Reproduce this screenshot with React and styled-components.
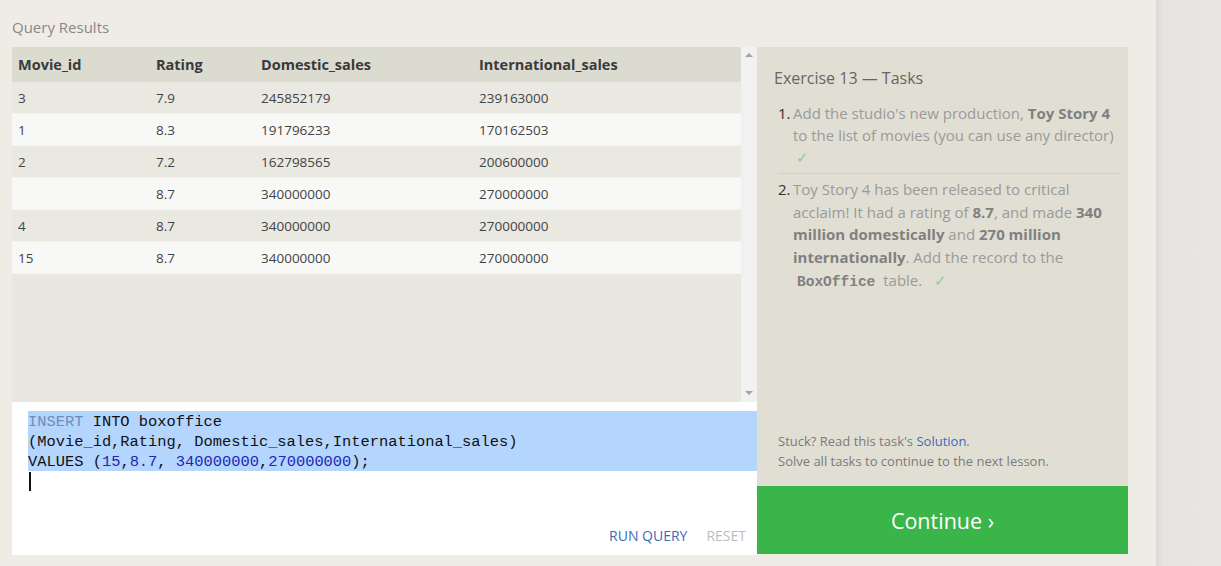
import React from "react";
import styled, { createGlobalStyle } from "styled-components";

const Global = createGlobalStyle`
  html, body { margin: 0; padding: 0; background: #efece6; }
  body { font-family: "Open Sans", "Noto Sans", sans-serif; }
  * { box-sizing: border-box; }
`;

const Page = styled.div`
  display: flex;
  width: 1221px;
  height: 566px;
  overflow: hidden;
`;

const Main = styled.div`
  width: 1156px;
  flex: none;
  padding: 0 28px 0 12px;
  display: flex;
  flex-direction: column;
`;

const SideStrip = styled.div`
  flex: 1;
  background: linear-gradient(to right, #dedad7 0px, #e8e4e1 8px, #e9e5e2 100%);
`;

const SectionLabel = styled.div`
  height: 47px;
  padding-top: 17px;
  font-size: 15px;
  line-height: 21px;
  color: #888;
`;

const Workspace = styled.div`
  display: grid;
  grid-template-columns: 745px 371px;
  height: 508px;
`;

const LeftCol = styled.div`
  display: flex;
  flex-direction: column;
`;

const ResultsArea = styled.div`
  display: flex;
  height: 355px;
  background: #e9e7e0;
`;

const TableWrap = styled.div`
  flex: 1;
`;

const Row = styled.div`
  display: grid;
  grid-template-columns: 138px 105px 218px 1fr;
  height: ${(p) => (p.$head ? "35px" : "32px")};
  align-items: center;
  padding-left: 6px;
  font-size: ${(p) => (p.$head ? "14.5px" : "13.5px")};
  font-weight: ${(p) => (p.$head ? 700 : 400)};
  color: ${(p) => (p.$head ? "#3a3a3a" : "#444")};
  background: ${(p) => (p.$head ? "#dcdbd0" : p.$odd ? "#e9e8e1" : "#f8f8f7")};
  border-bottom: ${(p) => (p.$head ? "none" : "1px solid #f4f3ef")};
`;

const Cell = styled.div`
  white-space: nowrap;
`;

const Scrollbar = styled.div`
  width: 16px;
  background: #f1f1f1;
  display: flex;
  flex-direction: column;
  justify-content: space-between;
  align-items: center;
  padding: 6px 0 7px;
`;

const Arrow = styled.div`
  width: 0;
  height: 0;
  border-left: 4px solid transparent;
  border-right: 4px solid transparent;
  ${(p) =>
    p.$down
      ? "border-top: 4px solid #a3a3a3;"
      : "border-bottom: 4px solid #a3a3a3;"}
`;

const Editor = styled.div`
  flex: 1;
  background: #fff;
  display: flex;
  flex-direction: column;
  padding: 9px 0 0 16px;
`;

const Code = styled.div`
  font-family: "Liberation Mono", "DejaVu Sans Mono", monospace;
  font-size: 15.4px;
  color: #111;
`;

const CodeLine = styled.div`
  height: 20px;
  line-height: 23px;
  white-space: pre;
  background: ${(p) => (p.$sel ? "#b4d5fe" : "transparent")};
`;

const Kw = styled.span`
  color: ${(p) => (p.$dim ? "#6d8db5" : "#111")};
`;

const Num = styled.span`
  color: #1c27b4;
`;

const Caret = styled.div`
  width: 2px;
  height: 19px;
  margin: 1px 0 0 1px;
  background: #111;
`;

const EditorActions = styled.div`
  margin-top: auto;
  display: flex;
  justify-content: flex-end;
  gap: 19px;
  padding: 0 11px 9px 0;
`;

const ActionBtn = styled.span`
  font-size: 14px;
  line-height: 20px;
  text-transform: uppercase;
  color: ${(p) => (p.$muted ? "#bdbdbd" : "#3a6cb8")};
`;

const RightCol = styled.div`
  display: flex;
  flex-direction: column;
  background: #e1dfd4;
  height: 507px;
`;

const TaskPanel = styled.div`
  flex: 1;
  display: flex;
  flex-direction: column;
  padding: 20px 8px 15px 17px;
`;

const TaskTitle = styled.div`
  font-size: 16px;
  line-height: 22px;
  color: #666;
  margin-bottom: 13px;
`;

const TaskItem = styled.div`
  display: flex;
  padding: ${(p) => (p.$first ? "0 0 5px" : "4px 0 0")};
  border-bottom: ${(p) => (p.$first ? "1px solid #d2d0c6" : "none")};
  margin-left: 4px;
`;

const TaskNum = styled.span`
  width: 15px;
  flex: none;
  font-size: 15px;
  line-height: 22px;
  color: #333;
`;

const TaskText = styled.div`
  font-size: 15px;
  line-height: ${(p) => (p.$tall ? "22.7px" : "22px")};
  color: #9a9a9a;
  b {
    color: #808080;
    font-weight: 700;
  }
`;

const Mono = styled.code`
  font-family: "Liberation Mono", "DejaVu Sans Mono", monospace;
  font-weight: 700;
  font-size: 14.5px;
  color: #808080;
  padding: 0 4px;
`;

const Check = styled.span`
  color: #8fc996;
  margin-left: ${(p) => (p.$inline ? "8px" : "3px")};
`;

const Hint = styled.div`
  margin-top: auto;
  margin-left: 4px;
  font-size: 13px;
  line-height: 20px;
  color: #7a7a7a;
  a {
    color: #3a6cb8;
    text-decoration: none;
  }
`;

const ContinueBtn = styled.div`
  height: 68px;
  background: #3ab54a;
  color: #fff;
  font-size: 21.5px;
  display: flex;
  align-items: center;
  justify-content: center;
`;

const rows = [
  ["3", "7.9", "245852179", "239163000"],
  ["1", "8.3", "191796233", "170162503"],
  ["2", "7.2", "162798565", "200600000"],
  ["", "8.7", "340000000", "270000000"],
  ["4", "8.7", "340000000", "270000000"],
  ["15", "8.7", "340000000", "270000000"],
];

export default function App() {
  return (
    <Page>
      <Global />
      <Main>
        <SectionLabel>Query Results</SectionLabel>
        <Workspace>
          <LeftCol>
            <ResultsArea>
              <TableWrap>
                <Row $head>
                  <Cell>Movie_id</Cell>
                  <Cell>Rating</Cell>
                  <Cell>Domestic_sales</Cell>
                  <Cell>International_sales</Cell>
                </Row>
                {rows.map((r, i) => (
                  <Row key={i} $odd={i % 2 === 0}>
                    {r.map((c, j) => (
                      <Cell key={j}>{c}</Cell>
                    ))}
                  </Row>
                ))}
              </TableWrap>
              <Scrollbar>
                <Arrow />
                <Arrow $down />
              </Scrollbar>
            </ResultsArea>
            <Editor>
              <Code>
                <CodeLine $sel>
                  <Kw $dim>INSERT</Kw> INTO boxoffice
                </CodeLine>
                <CodeLine $sel>(Movie_id,Rating, Domestic_sales,International_sales)</CodeLine>
                <CodeLine $sel>
                  VALUES (<Num>15</Num>,<Num>8.7</Num>, <Num>340000000</Num>,<Num>270000000</Num>);
                </CodeLine>
                <Caret />
              </Code>
              <EditorActions>
                <ActionBtn>Run Query</ActionBtn>
                <ActionBtn $muted>Reset</ActionBtn>
              </EditorActions>
            </Editor>
          </LeftCol>
          <RightCol>
            <TaskPanel>
              <TaskTitle>Exercise 13 — Tasks</TaskTitle>
              <TaskItem $first>
                <TaskNum>1.</TaskNum>
                <TaskText>
                  Add the studio's new production, <b>Toy Story 4</b> to the list of movies (you can use any director)
                  <br />
                  <Check>✓</Check>
                </TaskText>
              </TaskItem>
              <TaskItem>
                <TaskNum>2.</TaskNum>
                <TaskText $tall>
                  Toy Story 4 has been released to critical acclaim! It had a rating of <b>8.7</b>, and made{" "}
                  <b>340 million domestically</b> and <b>270 million internationally</b>. Add the record to the{" "}
                  <Mono>BoxOffice</Mono> table. <Check $inline>✓</Check>
                </TaskText>
              </TaskItem>
              <Hint>
                Stuck? Read this task's <a>Solution</a>.
                <br />
                Solve all tasks to continue to the next lesson.
              </Hint>
            </TaskPanel>
            <ContinueBtn>Continue ›</ContinueBtn>
          </RightCol>
        </Workspace>
      </Main>
      <SideStrip />
    </Page>
  );
}
